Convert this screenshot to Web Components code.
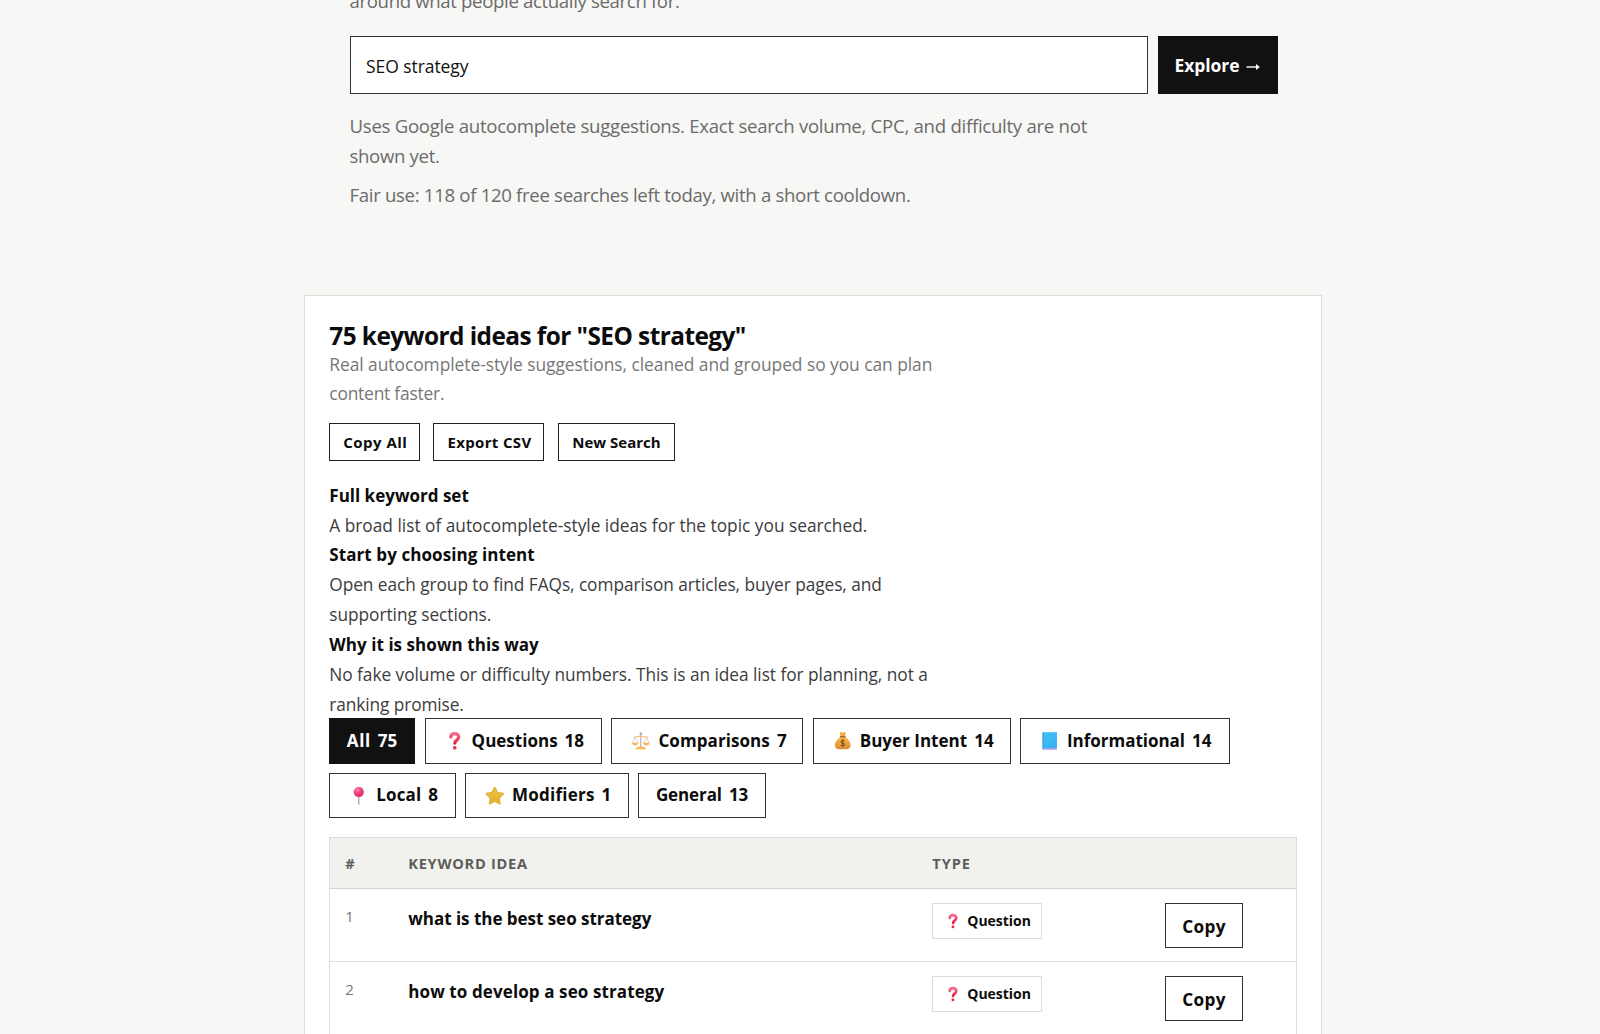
<!DOCTYPE html>
<html lang="en">
<head>
<meta charset="utf-8">
<title>Keyword ideas</title>
<style>
  html, body { margin: 0; height: 1034px; overflow: hidden; }
  body {
    background: #f7f7f5;
    color: #0c0c0c;
    font-family: "Open Sans", "Noto Sans", sans-serif;
  }
</style>
</head>
<body>
<keyword-page></keyword-page>

<script>
const ICONS = {
  question: `
    <linearGradient id="g" x1="0" y1="0" x2="0" y2="1"><stop offset="0" stop-color="#f76a8d"/><stop offset="1" stop-color="#ee1c3c"/></linearGradient>
    <path d="M5.9 6.1C6 3.6 7.7 2.7 9.9 2.7c2.4 0 4.2 1.3 4.2 3.5 0 3-3.7 3-4 6.3" fill="none" stroke="url(#g)" stroke-width="3.3" stroke-linecap="round"/>
    <circle cx="10" cy="17.2" r="1.9" fill="#f02b4b"/>`,
  scales: `
    <g fill="none" stroke-linecap="round">
      <path d="M10 2.5v14" stroke="#c5b2c4" stroke-width="1.4"/>
      <path d="M3.2 6.4C6 5 7.5 6.2 10 5.2c2.5 1 4 -.2 6.8 1.2" stroke="#f3c07c" stroke-width="1.3"/>
      <path d="M4.2 6.4L1.6 12M4.2 6.4L7 12M15.8 6.4L13 12M15.8 6.4L18.4 12" stroke="#d8c6d8" stroke-width=".9"/>
    </g>
    <circle cx="10" cy="2.6" r="1.2" fill="#b7a3bd"/>
    <path d="M.8 12h7c-.4 2-1.8 2.7-3.5 2.7S1.2 14 .8 12zM12.2 12h7c-.4 2-1.8 2.7-3.5 2.7s-3.1-.7-3.5-2.700z" fill="#fbb449"/>
    <path d="M4.500 18.800c.5-2 2.500-2.800 5.500-2.800s5 .8 5.500 2.800z" fill="#fbb844"/>`,
  money: `
    <linearGradient id="g" x1="0" y1="0" x2="0" y2="1"><stop offset="0" stop-color="#fbb944"/><stop offset="1" stop-color="#dc8a35"/></linearGradient>
    <path d="M6.8 1.8c1.2-1 2 .2 3.2-.4 1.2.6 2-.6 3.2.4L12 5.8H8z" fill="#f3a83a"/>
    <path d="M8 6h4c3.500 2 6 5.500 6 8.800 0 3-2 4-8 4s-8-1-8-4C2 11.500 4.500 8 8 6z" fill="url(#g)"/>
    <path d="M7.6 5.900h4.800" stroke="#9d6a35" stroke-width="1.300" stroke-linecap="round"/>
    <path d="M12 10.300c-1-1-3.800-.8-3.800.8 0 1.900 3.800 1 3.800 2.900 0 1.600-3 1.700-4 .6M10 8.600v7.600" fill="none" stroke="#6d4722" stroke-width="1"/>`,
  book: `
    <linearGradient id="g" x1="0" y1="0" x2="1" y2="1"><stop offset="0" stop-color="#3fc4f3"/><stop offset="1" stop-color="#38aef0"/></linearGradient>
    <path d="M2.8 17.2h14.400v2H2.800z" fill="#b79be6"/>
    <path d="M2.6 1.200h14.800v16.400H2.600z" fill="url(#g)"/>
    <path d="M2.6 1.200h1.200v17.400H2.600z" fill="#35a2e2"/>`,
  pin: `
    <radialGradient id="g" cx=".38" cy=".3" r=".8"><stop offset="0" stop-color="#ff8fae"/><stop offset=".4" stop-color="#f5427a"/><stop offset="1" stop-color="#d92560"/></radialGradient>
    <path d="M10 10v8.600" stroke="#a9a3ad" stroke-width="1.300" stroke-linecap="round"/>
    <circle cx="10" cy="6.200" r="5.200" fill="url(#g)"/>`,
  star: `
    <linearGradient id="g" x1="0" y1="0" x2="0" y2="1"><stop offset="0" stop-color="#f6d044"/><stop offset="1" stop-color="#dda52f"/></linearGradient>
    <path d="M10 1.800l2.600 5.100 5.900 1-4.200 4.200.9 5.900-5.200-2.700L4.800 18l.9-5.900L1.500 7.900l5.900-1z" fill="url(#g)" stroke="#e3b63a" stroke-width="2" stroke-linejoin="round"/>`
};

class EmojiIcon extends HTMLElement {
  constructor() {
    super();
    this.attachShadow({ mode: 'open' });
  }

  connectedCallback() {
    const size = this.getAttribute('size') || '20';
    this.shadowRoot.innerHTML = `
      <style>
        :host { display: block; flex: none; width: ${size}px; height: ${size}px; }
        svg { display: block; width: 100%; height: 100%; }
      </style>
      <svg viewBox="0 0 20 20">${ICONS[this.getAttribute('name')] || ''}</svg>
    `;
  }
}

// One line of text, tracked so that it takes the given width.
class TextLine extends HTMLElement {
  constructor() {
    super();
    this.attachShadow({ mode: 'open' });
  }

  connectedCallback() {
    const width = Number(this.getAttribute('width'));
    this.shadowRoot.innerHTML = `
      <style>
        :host { display: block; flex: none; width: ${width}px; white-space: nowrap; }
        span { display: inline-block; }
      </style>
      <span><slot></slot></span>
    `;
    const span = this.shadowRoot.querySelector('span');
    const natural = span.getBoundingClientRect().width;
    span.style.letterSpacing = `${(width - natural) / this.textContent.length}px`;
  }
}

class SearchForm extends HTMLElement {
  constructor() {
    super();
    this.attachShadow({ mode: 'open' });
  }

  connectedCallback() {
    this.shadowRoot.innerHTML = `
      <style>
        :host { display: flex; gap: 10px; width: 928px; height: 57.5px; font-size: 17.5px; line-height: 59px; }
        .field { flex: 1; box-sizing: border-box; padding-left: 15.5px; border: 1px solid #333; background: #fff; line-height: 58px; }
        .submit { display: flex; gap: 5px; box-sizing: border-box; width: 119.5px; padding-left: 16.5px; background: #111; color: #fff; font-weight: 700; }
        svg { display: block; width: 16px; height: 10px; margin-top: 26px; }
      </style>
      <div class="field"><text-line width="102.5">SEO strategy</text-line></div>
      <div class="submit">
        <text-line width="65">Explore</text-line>
        <svg viewBox="0 0 16 10"><path d="M1.500 5h12" stroke="#fff" stroke-width="1.400"/><path d="M11 2l3.800 3L11 8z" fill="#fff"/></svg>
      </div>
    `;
  }
}

class ActionButton extends HTMLElement {
  constructor() {
    super();
    this.attachShadow({ mode: 'open' });
  }

  connectedCallback() {
    this.shadowRoot.innerHTML = `
      <style>
        :host {
          display: block; box-sizing: border-box; width: ${this.getAttribute('width')}px; height: 38px;
          padding-left: 13px; border: 1px solid #222; background: #fff;
          font-size: 15px; font-weight: 700; line-height: 37px;
        }
      </style>
      <slot></slot>
    `;
  }
}

class FilterChip extends HTMLElement {
  constructor() {
    super();
    this.attachShadow({ mode: 'open' });
  }

  connectedCallback() {
    const icon = this.getAttribute('icon');
    this.shadowRoot.innerHTML = `
      <style>
        :host {
          display: flex; align-items: center; box-sizing: border-box;
          width: ${this.getAttribute('width')}px; height: 45.5px;
          padding-left: ${icon ? 19 : 16.5}px; border: 1px solid #333; background: #fff;
          font-size: 17px; font-weight: 700; line-height: 44px;
        }
        :host([active]) { background: #111; border-color: #111; color: #fff; }
        emoji-icon { margin-right: 7.5px; }
        .count { margin-left: 7px; }
      </style>
      ${icon ? `<emoji-icon name="${icon}" size="19.5"></emoji-icon>` : ''}
      <slot></slot>
      <span class="count">${this.getAttribute('count')}</span>
    `;
  }
}

class KeywordRow extends HTMLElement {
  constructor() {
    super();
    this.attachShadow({ mode: 'open' });
  }

  connectedCallback() {
    this.shadowRoot.innerHTML = `
      <style>
        :host {
          display: grid; grid-template-columns: 63px 524px 233px 1fr; align-items: start;
          box-sizing: border-box; height: 73px; padding: 14px 0 0 15px; border-bottom: 1px solid #dcdcd8;
        }
        .num { font-size: 15px; line-height: 27px; color: #777; }
        .idea { font-size: 17px; font-weight: 700; line-height: 31px; }
        .badge {
          display: flex; align-items: center; box-sizing: border-box; width: 109.5px; height: 36px;
          padding-left: 11.5px; border: 1px solid #dcdcd8; font-size: 14px; font-weight: 700; line-height: 34px;
        }
        .badge emoji-icon { margin-right: 6.5px; }
        .copy {
          box-sizing: border-box; width: 78px; height: 45.5px; padding-left: 16px;
          border: 1px solid #333; font-size: 17.2px; font-weight: 700; line-height: 45px;
        }
      </style>
      <div class="num">${this.getAttribute('num')}</div>
      <div class="idea"><slot></slot></div>
      <div class="badge"><emoji-icon name="question" size="16"></emoji-icon><text-line width="63.5">Question</text-line></div>
      <div class="copy"><text-line width="43.5">Copy</text-line></div>
    `;
  }
}

class KeywordTable extends HTMLElement {
  constructor() {
    super();
    this.attachShadow({ mode: 'open' });
  }

  connectedCallback() {
    this.shadowRoot.innerHTML = `
      <style>
        :host { display: block; box-sizing: border-box; width: 967.5px; border: 1px solid #dcdcd8; }
        .head {
          display: grid; grid-template-columns: 63px 524px 1fr; height: 50px; padding-left: 15px;
          border-bottom: 1px solid #d4d4d0; background: #f1f2ee; color: #5c5c5a;
          font-size: 14.6px; font-weight: 700; line-height: 50px;
        }
      </style>
      <div class="head">
        <span>#</span>
        <text-line width="119.5">KEYWORD IDEA</text-line>
        <text-line width="38.5">TYPE</text-line>
      </div>
      <slot></slot>
    `;
  }
}

class ResultsPanel extends HTMLElement {
  constructor() {
    super();
    this.attachShadow({ mode: 'open' });
  }

  connectedCallback() {
    this.shadowRoot.innerHTML = `
      <style>
        :host {
          display: block; box-sizing: border-box; width: 1018px; height: 800px;
          padding: 26px 0 0 24.3px; border: 1px solid #ddddd9; background: #fff;
        }
        .title { font-size: 24.4px; font-weight: 700; line-height: 28px; }
        .lead { font-size: 17.4px; line-height: 29.3px; color: #777; }
        .actions { display: flex; gap: 13.7px; margin-top: 14.8px; }
        .notes { margin-top: 19.3px; font-size: 17.3px; line-height: 29.86px; color: #3c3c3c; }
        .notes .strong { font-weight: 700; font-size: 17px; color: #0c0c0c; }
        .filters { display: flex; flex-direction: column; gap: 9px; margin-top: -1.5px; }
        .filters div { display: flex; gap: 9.3px; }
        keyword-table { margin-top: 18.5px; }
      </style>
      <text-line class="title" width="416.5">75 keyword ideas for "SEO strategy"</text-line>
      <div class="lead">
        <text-line width="603">Real autocomplete-style suggestions, cleaned and grouped so you can plan</text-line>
        <text-line width="115">content faster.</text-line>
      </div>
      <div class="actions">
        <action-button width="90.5"><text-line width="64">Copy All</text-line></action-button>
        <action-button width="111"><text-line width="84">Export CSV</text-line></action-button>
        <action-button width="116.5"><text-line width="88.5">New Search</text-line></action-button>
      </div>
      <div class="notes">
        <text-line class="strong" width="139.5">Full keyword set</text-line>
        <text-line width="538">A broad list of autocomplete-style ideas for the topic you searched.</text-line>
        <text-line class="strong" width="205.5">Start by choosing intent</text-line>
        <text-line width="552.5">Open each group to find FAQs, comparison articles, buyer pages, and</text-line>
        <text-line width="162">supporting sections.</text-line>
        <text-line class="strong" width="209.5">Why it is shown this way</text-line>
        <text-line width="598.5">No fake volume or difficulty numbers. This is an idea list for planning, not a</text-line>
        <text-line width="134.5">ranking promise.</text-line>
      </div>
      <div class="filters">
        <div>
          <filter-chip width="86" count="75" active><text-line width="24">All</text-line></filter-chip>
          <filter-chip width="177.5" count="18" icon="question"><text-line width="86">Questions</text-line></filter-chip>
          <filter-chip width="192" count="7" icon="scales"><text-line width="111.5">Comparisons</text-line></filter-chip>
          <filter-chip width="198" count="14" icon="money"><text-line width="107.5">Buyer Intent</text-line></filter-chip>
          <filter-chip width="210.5" count="14" icon="book"><text-line width="118">Informational</text-line></filter-chip>
        </div>
        <div>
          <filter-chip width="126.5" count="8" icon="pin"><text-line width="45">Local</text-line></filter-chip>
          <filter-chip width="164" count="1" icon="star"><text-line width="82.5">Modifiers</text-line></filter-chip>
          <filter-chip width="128" count="13"><text-line width="66">General</text-line></filter-chip>
        </div>
      </div>
      <keyword-table>
        <keyword-row num="1"><text-line width="243">what is the best seo strategy</text-line></keyword-row>
        <keyword-row num="2"><text-line width="256">how to develop a seo strategy</text-line></keyword-row>
      </keyword-table>
    `;
  }
}

class KeywordPage extends HTMLElement {
  constructor() {
    super();
    this.attachShadow({ mode: 'open' });
  }

  connectedCallback() {
    this.shadowRoot.innerHTML = `
      <style>
        :host { display: flow-root; height: 1034px; overflow: hidden; }
        .hero { margin: -14px 0 0 349.5px; font-size: 18.6px; line-height: 30.4px; color: #6b6b6b; }
        search-form { margin-top: 19.6px; color: #111; }
        .hint { margin-top: 17.4px; }
        .fair { margin-top: 8.2px; }
        results-panel { margin: 84.7px 0 0 304px; }
      </style>
      <div class="hero">
        <text-line width="330">around what people actually search for.</text-line>
        <search-form></search-form>
        <div class="hint">
          <text-line width="737.5">Uses Google autocomplete suggestions. Exact search volume, CPC, and difficulty are not</text-line>
          <text-line width="90">shown yet.</text-line>
        </div>
        <text-line class="fair" width="561">Fair use: 118 of 120 free searches left today, with a short cooldown.</text-line>
      </div>
      <results-panel></results-panel>
    `;
  }
}

customElements.define('emoji-icon', EmojiIcon);
customElements.define('text-line', TextLine);
customElements.define('search-form', SearchForm);
customElements.define('action-button', ActionButton);
customElements.define('filter-chip', FilterChip);
customElements.define('keyword-row', KeywordRow);
customElements.define('keyword-table', KeywordTable);
customElements.define('results-panel', ResultsPanel);
customElements.define('keyword-page', KeywordPage);
</script>
</body>
</html>
